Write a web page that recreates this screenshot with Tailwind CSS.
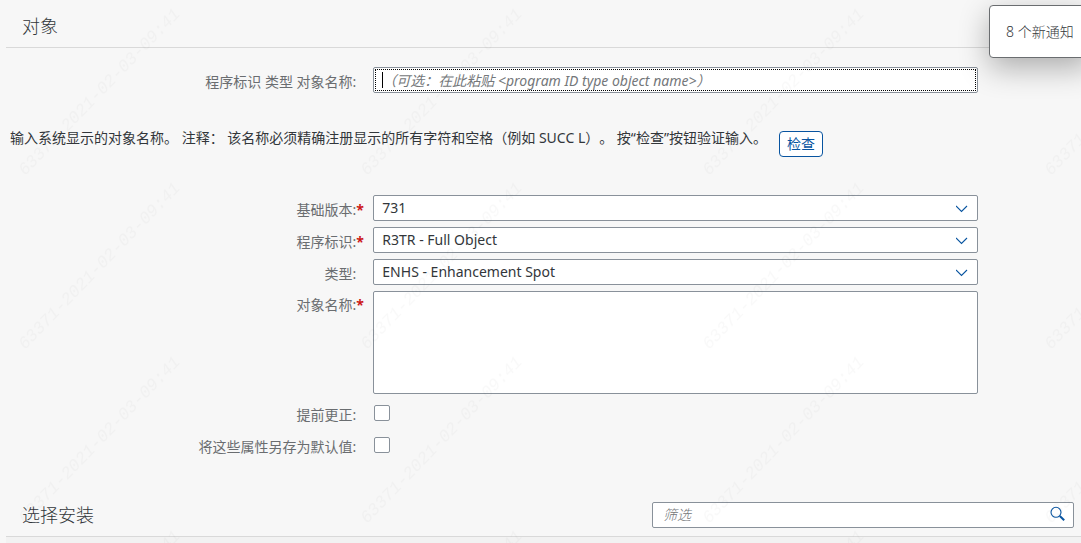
<!DOCTYPE html>
<html lang="zh-CN">
<head>
<meta charset="utf-8">
<meta name="viewport" content="width=device-width, initial-scale=1">
<title>对象</title>
<script src="https://cdn.jsdelivr.net/npm/@tailwindcss/browser@4"></script>
</head>
<body class="relative min-h-screen overflow-x-hidden bg-[#f7f7f7] font-['Noto_Sans','Noto_Sans_CJK_SC',sans-serif] text-sm font-light text-[#32363a]">
<main class="flex min-h-screen flex-col pl-1.5">
  <header class="flex h-12 items-center border-b border-[#d9d9d9] px-4 pt-1">
    <h1 class="text-lg">对象</h1>
  </header>

  <form class="flex flex-col font-normal" onsubmit="return false">
    <div class="mt-[19px] flex items-center">
      <label for="paste" class="w-1/3 pt-1 pr-2 text-right leading-5 text-[#6a6d70]">程序标识 类型 对象名称:</label>
      <div class="w-7/12 pr-[13px] pl-[9px]">
        <div class="relative">
          <input id="paste" type="text" placeholder="（可选：在此粘贴 &lt;program ID type object name&gt;）" class="block h-[26px] w-full rounded-xs border border-[#89919a] bg-white px-2 outline-1 -outline-offset-3 outline-dotted outline-black placeholder:text-[#74777a] placeholder:italic">
          <span class="pointer-events-none absolute top-[5px] left-[9px] h-4 w-px bg-black"></span>
        </div>
      </div>
    </div>

    <div class="mt-9 flex items-start pl-1">
      <p class="leading-[18px] [text-spacing-trim:space-all]">输入系统显示的对象名称。 注释： 该名称必须精确注册显示的所有字符和空格（例如 SUCC L）。 按“检查”按钮验证输入。</p>
      <button type="button" class="mt-0.5 ml-3 h-[26px] w-11 shrink-0 rounded border border-[#0854a0] bg-white text-[#0854a0]">检查</button>
    </div>

    <div class="mt-[38px] flex flex-col gap-1.5">
      <div class="flex items-center">
        <label for="release" class="flex w-1/3 justify-end pt-1 leading-5 text-[#6a6d70]">基础版本:<span class="w-2 font-bold text-[#cc1919]">*</span></label>
        <div class="w-7/12 pr-[13px] pl-[9px]"><div class="relative">
          <select id="release" class="block h-[26px] w-full appearance-none rounded-xs border border-[#89919a] bg-white px-2"><option>731</option></select>
          <svg class="pointer-events-none absolute top-2 right-2.5 h-3 w-3" viewBox="0 0 12 12" fill="none" stroke="#0854a0" stroke-width="1.1"><path d="M0 3 5.5 8.5 11 3"/></svg>
        </div></div>
      </div>
      <div class="flex items-center">
        <label for="program" class="flex w-1/3 justify-end pt-1 leading-5 text-[#6a6d70]">程序标识:<span class="w-2 font-bold text-[#cc1919]">*</span></label>
        <div class="w-7/12 pr-[13px] pl-[9px]"><div class="relative">
          <select id="program" class="block h-[26px] w-full appearance-none rounded-xs border border-[#89919a] bg-white px-2"><option>R3TR - Full Object</option></select>
          <svg class="pointer-events-none absolute top-2 right-2.5 h-3 w-3" viewBox="0 0 12 12" fill="none" stroke="#0854a0" stroke-width="1.1"><path d="M0 3 5.5 8.5 11 3"/></svg>
        </div></div>
      </div>
      <div class="flex items-center">
        <label for="type" class="w-1/3 pt-1 pr-2 text-right leading-5 text-[#6a6d70]">类型:</label>
        <div class="w-7/12 pr-[13px] pl-[9px]"><div class="relative">
          <select id="type" class="block h-[26px] w-full appearance-none rounded-xs border border-[#89919a] bg-white px-2"><option>ENHS - Enhancement Spot</option></select>
          <svg class="pointer-events-none absolute top-2 right-2.5 h-3 w-3" viewBox="0 0 12 12" fill="none" stroke="#0854a0" stroke-width="1.1"><path d="M0 3 5.5 8.5 11 3"/></svg>
        </div></div>
      </div>
      <div class="flex items-start">
        <label for="name" class="flex w-1/3 justify-end pt-1 leading-5 text-[#6a6d70]">对象名称:<span class="w-2 font-bold text-[#cc1919]">*</span></label>
        <div class="w-7/12 pr-[13px] pl-[9px]">
          <textarea id="name" class="block h-[103px] w-full resize-none rounded-xs border border-[#89919a] bg-white px-2 py-1"></textarea>
        </div>
      </div>
    </div>

    <div class="mt-[3px] flex h-8 items-center">
      <label for="early" class="w-1/3 pt-1 pr-2 text-right leading-5 text-[#6a6d70]">提前更正:</label>
      <input id="early" type="checkbox" class="ml-2.5 h-4 w-4 appearance-none rounded-xs border border-[#89919a] bg-white checked:bg-[#0854a0]">
    </div>
    <div class="flex h-8 items-center">
      <label for="defaults" class="w-1/3 pt-1 pr-2 text-right leading-5 text-[#6a6d70]">将这些属性另存为默认值:</label>
      <input id="defaults" type="checkbox" class="ml-2.5 h-4 w-4 appearance-none rounded-xs border border-[#89919a] bg-white checked:bg-[#0854a0]">
    </div>
  </form>

  <section class="mt-7 flex grow flex-col">
    <header class="flex h-12 items-center justify-between border-b border-[#d9d9d9] pr-[7px] pl-4 pt-3 pb-2">
      <h2 class="shrink-0 pr-4 text-lg">选择安装</h2>
      <div class="relative w-full max-w-[422px]">
        <input type="search" aria-label="筛选" placeholder="筛选" class="block h-[26px] w-full rounded-xs border border-[#89919a] bg-white pr-8 pl-2.5 placeholder:text-[#74777a] placeholder:italic">
        <button type="button" aria-label="搜索" class="absolute top-1 right-2 flex h-4 w-4 items-center justify-center">
          <svg class="h-4 w-4" viewBox="0 0 16 16" fill="none" stroke="#0854a0"><circle cx="6" cy="6.3" r="5" stroke-width="1.1"/><path d="M9.8 10 14.2 14.3" stroke-width="2"/></svg>
        </button>
      </div>
    </header>
    <div class="grow bg-[#f2f2f2]"></div>
  </section>
</main>

<aside role="status" class="absolute top-[5px] -right-[10px] flex h-[53px] w-[102px] items-center rounded border border-[#6a6d70] bg-white pl-4 whitespace-nowrap shadow-[0_10px_30px_rgba(0,0,0,0.3)]">8 个新通知</aside>

<svg class="pointer-events-none absolute inset-0 h-full w-full" aria-hidden="true">
  <defs>
    <pattern id="mark" width="342" height="174" patternUnits="userSpaceOnUse" x="10" y="6">
      <text transform="translate(15 170) rotate(-46)" font-size="17" font-family="Liberation Mono, monospace" font-style="italic" fill="#000" fill-opacity="0.025">63371-2021-02-03-09:41</text>
    </pattern>
  </defs>
  <rect width="100%" height="100%" fill="url(#mark)"/>
</svg>
</body>
</html>
